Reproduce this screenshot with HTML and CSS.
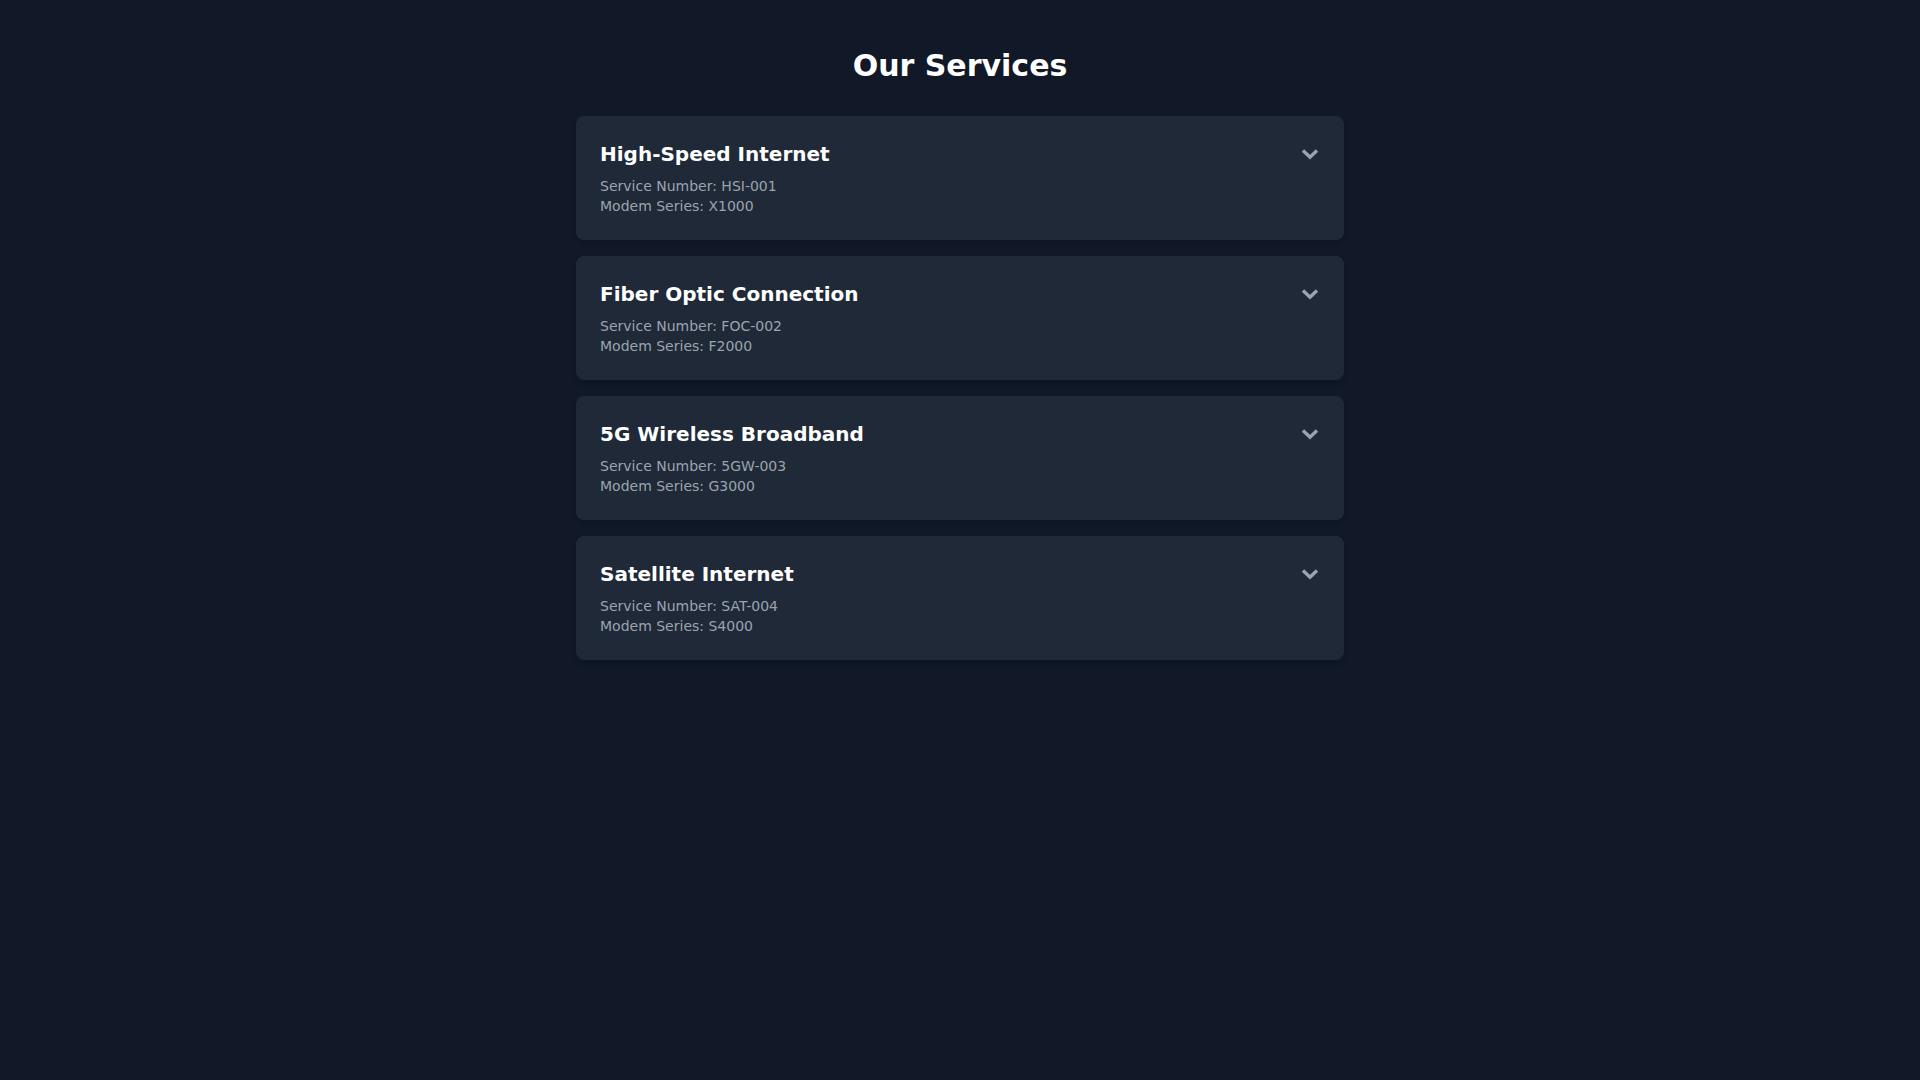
FILE: index.html
```html
<!DOCTYPE html>
<html lang="en">
<head>
<meta charset="utf-8">
<title>Our Services</title>
<link rel="stylesheet" href="styles.css">
</head>
<body>
<main class="page">
  <h1 class="title">Our Services</h1>
  <div class="list">
    <div class="card">
      <div class="card-head">
        <h2 class="card-title">High-Speed Internet</h2>
        <svg class="chev" viewBox="0 0 20 12" fill="none" stroke="currentColor" stroke-width="3.4"><path stroke-linejoin="miter" d="M3 2.5L10 9.2 17 2.5"/></svg>
      </div>
      <div class="meta">
        <p>Service Number: HSI-001</p>
        <p>Modem Series: X1000</p>
      </div>
    </div>
    <div class="card">
      <div class="card-head">
        <h2 class="card-title">Fiber Optic Connection</h2>
        <svg class="chev" viewBox="0 0 20 12" fill="none" stroke="currentColor" stroke-width="3.4"><path stroke-linejoin="miter" d="M3 2.5L10 9.2 17 2.5"/></svg>
      </div>
      <div class="meta">
        <p>Service Number: FOC-002</p>
        <p>Modem Series: F2000</p>
      </div>
    </div>
    <div class="card">
      <div class="card-head">
        <h2 class="card-title">5G Wireless Broadband</h2>
        <svg class="chev" viewBox="0 0 20 12" fill="none" stroke="currentColor" stroke-width="3.4"><path stroke-linejoin="miter" d="M3 2.5L10 9.2 17 2.5"/></svg>
      </div>
      <div class="meta">
        <p>Service Number: 5GW-003</p>
        <p>Modem Series: G3000</p>
      </div>
    </div>
    <div class="card">
      <div class="card-head">
        <h2 class="card-title">Satellite Internet</h2>
        <svg class="chev" viewBox="0 0 20 12" fill="none" stroke="currentColor" stroke-width="3.4"><path stroke-linejoin="miter" d="M3 2.5L10 9.2 17 2.5"/></svg>
      </div>
      <div class="meta">
        <p>Service Number: SAT-004</p>
        <p>Modem Series: S4000</p>
      </div>
    </div>
  </div>
</main>
</body>
</html>
```
FILE: styles.css
```css
* { box-sizing: border-box; }
html, body { margin: 0; padding: 0; }
body {
  background: #111827;
  color: #ffffff;
  font-family: "DejaVu Sans", sans-serif;
  min-height: 100vh;
}
.page {
  max-width: 768px;
  margin: 0 auto;
  padding: 48px 0;
}
.title {
  margin: 0 0 32px;
  font-size: 30px;
  line-height: 36px;
  font-weight: 700;
  text-align: center;
}
.list {
  display: flex;
  flex-direction: column;
  gap: 16px;
}
.card {
  background: #1f2937;
  border-radius: 8px;
  padding: 24px;
  box-shadow: 0 4px 6px -1px rgba(0,0,0,0.1), 0 2px 4px -2px rgba(0,0,0,0.1);
}
.card-head {
  display: flex;
  align-items: center;
  justify-content: space-between;
}
.card-title {
  margin: 0;
  font-size: 20px;
  line-height: 28px;
  font-weight: 700;
}
.chev {
  width: 20px;
  height: 12px;
  color: #9ca3af;
  flex-shrink: 0;
}
.meta {
  margin-top: 8px;
  color: #9ca3af;
  font-size: 14px;
  line-height: 20px;
}
.meta p { margin: 0; }
```
